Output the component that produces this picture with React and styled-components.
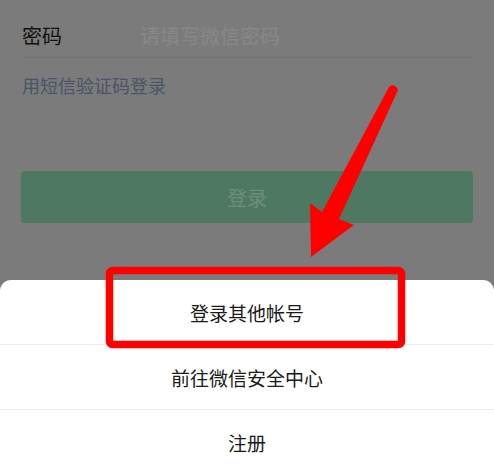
import React from "react";
import styled, { createGlobalStyle } from "styled-components";

const GlobalStyle = createGlobalStyle`
  html, body {
    margin: 0;
    padding: 0;
    background: #7b7b7b;
  }
  body {
    font-family: "Noto Sans CJK SC", "Noto Sans", sans-serif;
  }
`;

const Page = styled.div`
  position: relative;
  width: 494px;
  height: 474px;
  overflow: hidden;
  display: flex;
  flex-direction: column;
`;

const Form = styled.div`
  height: 281px;
  padding: 16px 21px 0 22px;
  box-sizing: border-box;
  display: flex;
  flex-direction: column;
`;

const FieldRow = styled.div`
  display: flex;
  align-items: center;
  height: 42px;
  padding-bottom: 2px;
  box-sizing: border-box;
  border-bottom: 1px solid #717171;
`;

const Label = styled.span`
  width: 118px;
  font-size: 20px;
  color: #121212;
`;

const Placeholder = styled.span`
  font-size: 20px;
  color: #888888;
`;

const SmsLink = styled.span`
  margin-top: 14px;
  font-size: 18px;
  line-height: 26px;
  color: #49536a;
`;

const LoginButton = styled.div`
  margin-top: 73px;
  margin-left: -1px;
  height: 52px;
  border-radius: 4px;
  background: #4f7862;
  display: flex;
  align-items: center;
  justify-content: center;
  font-size: 20px;
  color: #6d8e7b;
`;

const Sheet = styled.div`
  flex: 1;
  background: #ffffff;
  border-radius: 11px 11px 0 0;
  display: flex;
  flex-direction: column;
`;

const SheetItem = styled.div`
  height: ${({ h }) => h}px;
  display: flex;
  align-items: center;
  justify-content: center;
  font-size: 19px;
  color: #1a1a1a;
  border-bottom: ${({ last }) => (last ? "none" : "1px solid #ececec")};
`;

const Annotation = styled.svg`
  position: absolute;
  left: 0;
  top: 0;
  pointer-events: none;
`;

export default function App() {
  return (
    <>
      <GlobalStyle />
      <Page>
        <Form>
          <FieldRow>
            <Label>密码</Label>
            <Placeholder>请填写微信密码</Placeholder>
          </FieldRow>
          <SmsLink>用短信验证码登录</SmsLink>
          <LoginButton>登录</LoginButton>
        </Form>
        <Sheet>
          <SheetItem h={64}>登录其他帐号</SheetItem>
          <SheetItem h={64}>前往微信安全中心</SheetItem>
          <SheetItem h={64} last>
            注册
          </SheetItem>
        </Sheet>
        <Annotation width="494" height="474" viewBox="0 0 494 474">
          <rect
            x="109.5"
            y="270.5"
            width="292"
            height="74"
            rx="3"
            fill="none"
            stroke="#ff0000"
            strokeWidth="7.5"
          />
          <path
            d="M392 85 Q397 86 398 90 L339 219 L354 225 L311 257 L310 203 L322 212 L389 87 Z"
            fill="#ff0000"
          />
        </Annotation>
      </Page>
    </>
  );
}
